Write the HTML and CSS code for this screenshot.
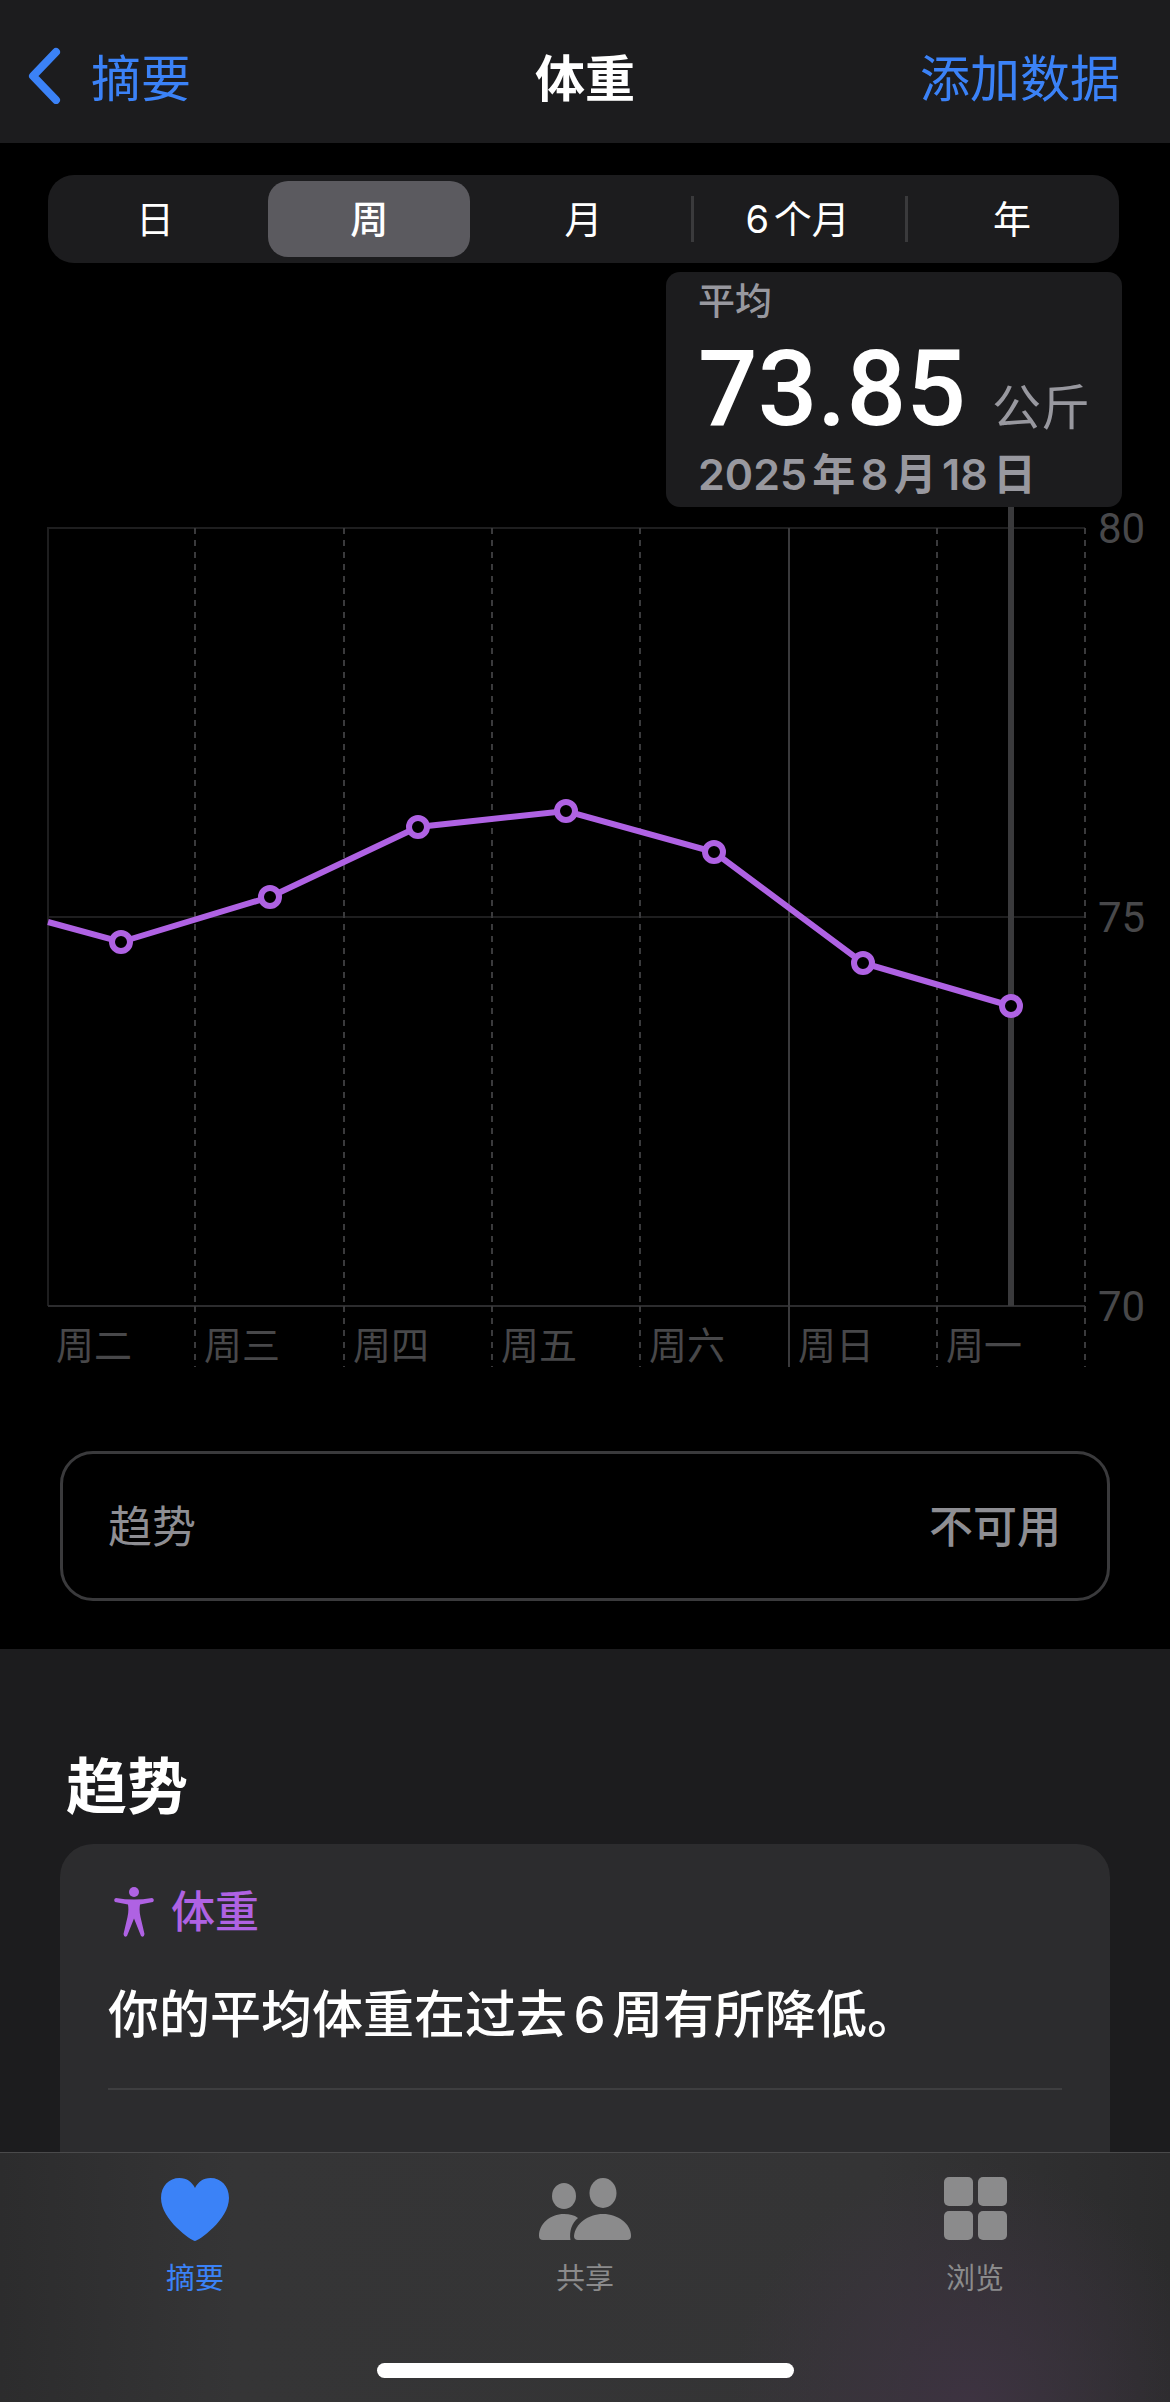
FILE: index.html
```html
<!doctype html>
<html lang="zh-CN">
	<head>
		<meta charset="UTF-8" />
		<meta name="viewport" content="width=device-width, initial-scale=1.0" />
		<title>体重</title>
		<link rel="stylesheet" href="styles.css">
	</head>
	<body>
		<header class="navbar">
			<a href="#" class="back">
				<svg class="chevron" viewBox="0 0 34 58" aria-hidden="true">
					<path d="M28 6 5 30l23 24" />
				</svg>
				摘要
			</a>
			<h1>体重</h1>
			<button type="button" class="add">添加数据</button>
		</header>

		<main>
			<div class="segments">
				<button type="button">日</button>
				<button type="button" class="selected" aria-pressed="true">周</button>
				<button type="button">月</button>
				<button type="button" class="divided">6个月</button>
				<button type="button" class="divided">年</button>
			</div>

			<div class="readout">
				<div class="readout-label">平均</div>
				<div class="readout-value">73.85 <span class="unit">公斤</span></div>
				<div class="readout-date">2025年8月18日</div>
			</div>

			<svg class="chart" viewBox="0 0 1170 864" role="img" aria-label="体重周图表">
				<path class="grid" d="M47 21H1085M47 410H1085M48 21V799" />
				<path class="baseline" d="M48 799H1085" />
				<!-- the dashes start again below the baseline -->
				<path class="day" d="M195 21V799M344 21V799M492 21V799M640 21V799M937 21V799M1085 21V799" />
				<path class="day" d="M195 799V860M344 799V860M492 799V860M640 799V860M937 799V860M1085 799V860" />
				<path class="week" d="M789 21V860" />
				<path class="cursor" d="M1011 0V799" />

				<path class="series" d="M48 415 121 435 270 390 418 320 566 304 714 345 863 456 1011 499" />
				<g class="points">
					<circle cx="121" cy="435" r="9" />
					<circle cx="270" cy="390" r="9" />
					<circle cx="418" cy="320" r="9" />
					<circle cx="566" cy="304" r="9" />
					<circle cx="714" cy="345" r="9" />
					<circle cx="863" cy="456" r="9" />
					<circle cx="1011" cy="499" r="9" />
				</g>

				<g class="axis-y">
					<text x="1098" y="36">80</text>
					<text x="1098" y="425">75</text>
					<text x="1098" y="814">70</text>
				</g>
				<g class="axis-x">
					<text x="56" y="852">周二</text>
					<text x="204" y="852">周三</text>
					<text x="353" y="852">周四</text>
					<text x="501" y="852">周五</text>
					<text x="649" y="852">周六</text>
					<text x="798" y="852">周日</text>
					<text x="946" y="852">周一</text>
				</g>
			</svg>

			<button type="button" class="trend-row">
				<span>趋势</span>
				<span class="trend-status">不可用</span>
			</button>

			<section class="trends">
				<h2>趋势</h2>
				<article class="card">
					<h3>
						<svg class="figure" viewBox="0 0 40 50" aria-hidden="true">
							<circle cx="20" cy="5" r="5" />
							<path d="M2 11Q20 14 38 11Q41 12 39 15L26 17.500Q25 24 26.500 30L30.500 47Q30 51 27 49L20 31.500 13 49Q10 51 9.500 47L13.500 30Q15 24 14 17.500L1 15Q-1 12 2 11Z" />
						</svg>
						体重
					</h3>
					<p>你的平均体重在过去6周有所降低。</p>
				</article>
			</section>
		</main>

		<nav class="tabbar">
			<div class="tabs">
				<a href="#" class="tab active">
					<svg viewBox="0 0 94 64" aria-hidden="true">
						<path d="M47 64C44 64 13 43 13 21C13 9 21 1 31.500 1C39 1 44 5 47 11C50 5 55 1 62.500 1C73 1 81 9 81 21C81 43 50 64 47 64Z" />
					</svg>
					摘要
				</a>
				<a href="#" class="tab">
					<svg viewBox="0 0 94 64" aria-hidden="true">
						<ellipse cx="26" cy="19" rx="12" ry="13" />
						<ellipse cx="65" cy="16" rx="13.500" ry="15" />
						<path d="M26 37C32 37 36 38 40 41C34 46 31 54 32.500 63H5Q1 63 1 59C1 47 12 37 26 37Z" />
						<path d="M65 37C80 37 93 47 93 59Q93 63 89 63H40Q36 63 36 59C37 47 50 37 65 37Z" />
					</svg>
					共享
				</a>
				<a href="#" class="tab">
					<svg viewBox="0 0 94 64" aria-hidden="true">
						<rect x="16" y="0" width="29" height="29" rx="5" />
						<rect x="50" y="0" width="29" height="29" rx="5" />
						<rect x="16" y="34" width="29" height="29" rx="5" />
						<rect x="50" y="34" width="29" height="29" rx="5" />
					</svg>
					浏览
				</a>
			</div>
			<div class="home-indicator"></div>
		</nav>
	</body>
</html>
```

FILE: styles.css
```css
* {
	box-sizing: border-box;
}

h1,
h2,
h3,
p,
body,
html {
	margin: 0;
	padding: 0;
}

body {
	display: flex;
	flex-direction: column;
	min-height: 100vh;
	background-color: #000;
	color: #fff;
	font-family: Inter, "Noto Sans CJK SC", sans-serif;
	text-autospace: normal;
}

a,
button {
	color: inherit;
	font: inherit;
	text-decoration: none;
}

button {
	padding: 0;
	border: 0;
	background: none;
}

.navbar {
	display: grid;
	grid-template-columns: 1fr auto 1fr;
	align-items: center;
	height: 143px;
	padding: 6px 28px 0;
	background-color: #1c1c1e;
	font-size: 50px;
}

.navbar h1 {
	font-size: 50px;
	font-weight: 600;
}

.back {
	display: flex;
	align-items: center;
	gap: 29px;
}

.back,
.add {
	color: #3b82f7;
}

.add {
	justify-self: end;
	margin-right: 22px;
}

.chevron {
	width: 34px;
	height: 58px;
	fill: none;
	stroke: currentColor;
	stroke-width: 8;
	stroke-linecap: round;
	stroke-linejoin: round;
}

main {
	display: flex;
	flex: 1;
	flex-direction: column;
}

.segments {
	display: grid;
	grid-template-columns: repeat(5, 1fr);
	height: 88px;
	margin: 32px 51px 9px 48px;
	border-radius: 26px;
	background-color: #1c1c1e;
	font-size: 38px;
}

.segments button {
	padding-bottom: 5px;
}

.segments .selected {
	margin: 6px;
	border-radius: 20px;
	background-color: #5b5a5f;
	font-weight: 500;
}

.segments .divided {
	background: linear-gradient(#3a3a3c, #3a3a3c) left center / 3px 46px no-repeat;
}

.readout {
	align-self: flex-end;
	height: 235px;
	margin-right: 48px;
	padding: 8px 32px 0;
	border-radius: 14px;
	background-color: #1c1c1e;
	color: #98989f;
	white-space: nowrap;
}

.readout-label {
	font-size: 37px;
	font-weight: 500;
	line-height: 44px;
}

.readout-value {
	height: 124px;
	color: #fff;
	font-family: Roboto, "Noto Sans CJK SC", sans-serif;
	font-size: 105px;
	font-weight: 500;
	line-height: 132px;
}

.unit {
	color: #98989f;
	font-size: 49px;
	font-weight: 400;
	line-height: 1;
}

.readout-date {
	font-size: 43px;
	font-weight: 600;
	line-height: 52px;
}

.chart {
	display: block;
	width: 100%;
	overflow: visible;
	fill: none;
	stroke-width: 2;
}

.grid {
	stroke: #1e1e1f;
}

.baseline {
	stroke: #2c2c2e;
}

.day,
.week {
	stroke: #3a3a3c;
}

.day {
	stroke-dasharray: 6 6;
}

.cursor {
	stroke: #3a3a3c;
	stroke-width: 6;
}

.series,
.points {
	stroke: #af62e3;
	stroke-width: 6;
}

.points {
	fill: #000;
}

.axis-x,
.axis-y {
	fill: #48484a;
	font-size: 38px;
}

.axis-y {
	font-family: Roboto, sans-serif;
	font-size: 42px;
}

.trend-row {
	display: flex;
	align-items: center;
	justify-content: space-between;
	height: 150px;
	margin: 80px 60px 48px;
	padding: 0 46px 4px 45px;
	border: 3px solid #3a3a3c;
	border-radius: 33px;
	color: #8e8e93;
	font-size: 44px;
}

.trend-status {
	font-weight: 500;
}

.trends {
	display: flex;
	flex: 1;
	flex-direction: column;
	padding: 102px 60px 0;
	background-color: #1c1c1e;
}

.trends h2 {
	padding: 0 6px;
	font-size: 61px;
	font-weight: 700;
	line-height: 72px;
}

.card {
	flex: 1;
	margin-top: 21px;
	padding: 40px 48px 0;
	border-radius: 33px 33px 0 0;
	background-color: #2c2c2e;
}

.card h3 {
	display: flex;
	align-items: center;
	gap: 17px;
	padding-left: 6px;
	color: #af62e3;
	font-size: 44px;
	font-weight: 500;
	line-height: 56px;
}

.figure {
	width: 40px;
	height: 50px;
	fill: currentColor;
}

.card p {
	padding: 45px 0 43px;
	border-bottom: 2px solid #3e3e40;
	font-size: 51px;
	font-weight: 500;
	line-height: 60px;
}

.tabbar {
	position: fixed;
	right: 0;
	bottom: 0;
	left: 0;
	display: flex;
	flex-direction: column;
	justify-content: space-between;
	height: 250px;
	padding: 24px 0;
	border-top: 1px solid #4a4a4b;
	background:
		radial-gradient(circle at 83% 100%, #3d3341, transparent 240px),
		linear-gradient(90deg, #2c2c2d, #353536 20%, #343435 75%, #2b2b2c);
}

.tabs {
	display: grid;
	grid-template-columns: repeat(3, 1fr);
}

.tab {
	display: flex;
	flex-direction: column;
	align-items: center;
	gap: 20px;
	color: #8b8b8c;
	font-size: 29px;
	line-height: 36px;
}

.tab.active {
	color: #3b82f7;
}

.tab svg {
	width: 94px;
	height: 64px;
	fill: currentColor;
}

.home-indicator {
	width: 417px;
	height: 15px;
	margin: 0 auto;
	border-radius: 8px;
	background-color: #fff;
}
```
